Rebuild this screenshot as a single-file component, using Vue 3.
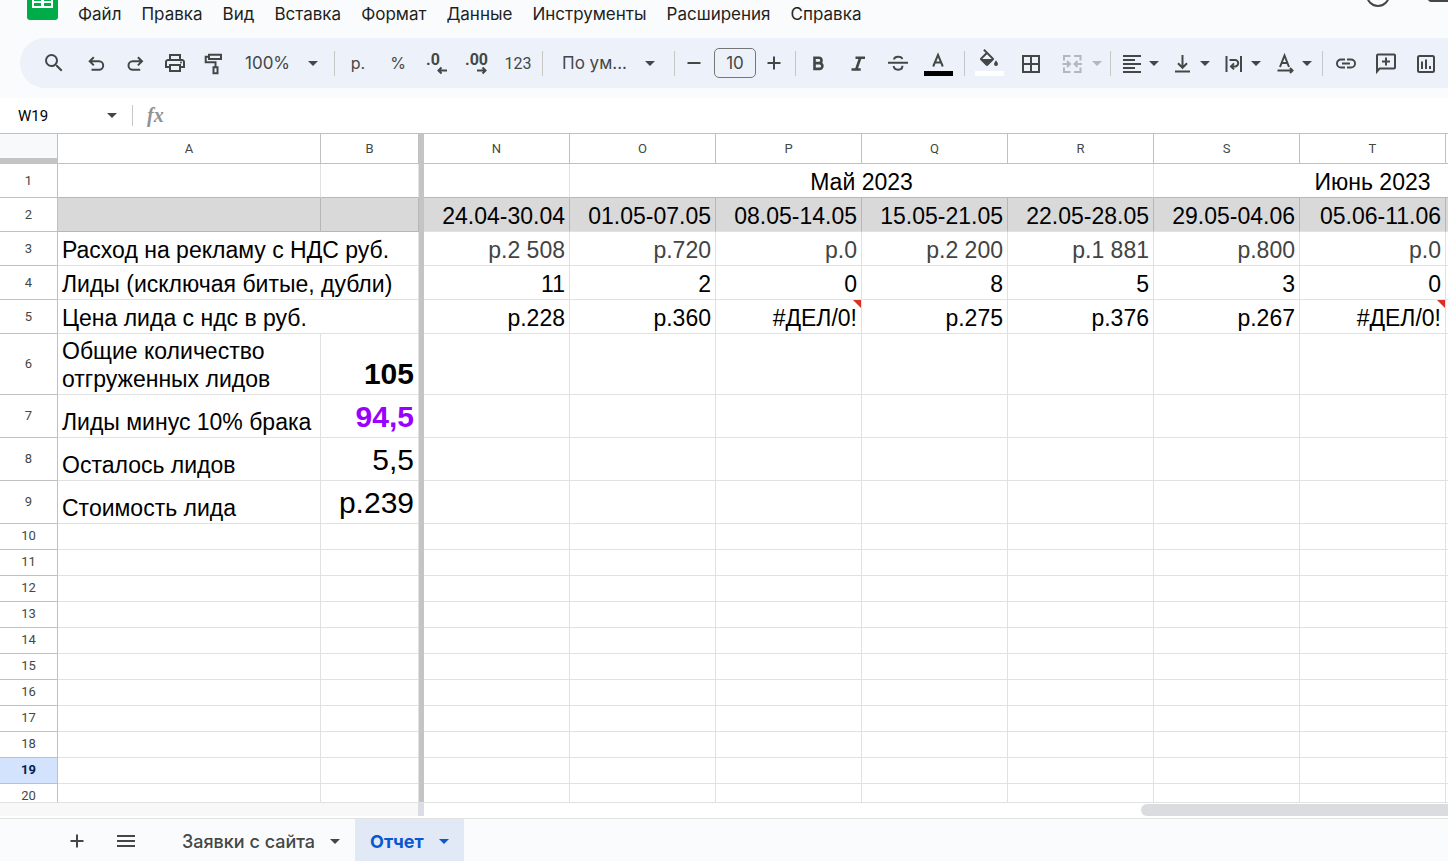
<script setup>
import { ref } from 'vue'

const menus = ['Файл', 'Правка', 'Вид', 'Вставка', 'Формат', 'Данные', 'Инструменты', 'Расширения', 'Справка']
const columns = ['N', 'O', 'P', 'Q', 'R', 'S', 'T', '']
const cellRef = ref('W19')
const fontSize = ref('10')

const periods = ['24.04-30.04', '01.05-07.05', '08.05-14.05', '15.05-21.05', '22.05-28.05', '29.05-04.06', '05.06-11.06', '']
const metrics = [
  { n: 3, label: 'Расход на рекламу с НДС руб.', kind: 'cost', values: ['р.2 508', 'р.720', 'р.0', 'р.2 200', 'р.1 881', 'р.800', 'р.0', ''] },
  { n: 4, label: 'Лиды (исключая битые, дубли)', kind: '', values: ['11', '2', '0', '8', '5', '3', '0', ''] },
  { n: 5, label: 'Цена лида с ндс в руб.', kind: '', values: ['р.228', 'р.360', '#ДЕЛ/0!', 'р.275', 'р.376', 'р.267', '#ДЕЛ/0!', ''] },
]
const totals = [
  { n: 6, label: 'Общие количество отгруженных лидов', value: '105', size: 'tall', kind: 'strong' },
  { n: 7, label: 'Лиды минус 10% брака', value: '94,5', size: 'mid', kind: 'strong violet' },
  { n: 8, label: 'Осталось лидов', value: '5,5', size: 'mid', kind: '' },
  { n: 9, label: 'Стоимость лида', value: 'р.239', size: 'mid', kind: '' },
]
const emptyRows = [10, 11, 12, 13, 14, 15, 16, 17, 18, 19, 20]
const selectedRow = 19
</script>

<template>
  <div class="app">
    <header class="top">
      <svg class="logo" viewBox="0 0 31 20" aria-hidden="true">
        <path d="M0 0h31v17a3 3 0 0 1-3 3H3a3 3 0 0 1-3-3z" fill="#00ac47" />
        <path d="M5 0h21v8H5z" fill="#fff" />
        <path d="M7 0h7v1H7zM17 0h7v1h-7zM7 3h7v3H7zM17 3h7v3h-7z" fill="#00ac47" />
      </svg>
      <nav class="menus">
        <button v-for="m in menus" :key="m" type="button">{{ m }}</button>
      </nav>
      <svg class="corner-icons" viewBox="0 0 84 8" aria-hidden="true">
        <circle cx="14" cy="-5" r="11" fill="none" stroke="#444746" stroke-width="2" />
        <path d="M64 0h20v2H67q-2 0-3-2z" fill="#444746" />
      </svg>
    </header>

    <div class="toolbar-wrap">
      <div class="toolbar" role="toolbar" aria-label="Панель инструментов">
        <button type="button" class="tool first" aria-label="Поиск">
          <svg class="ic" viewBox="0 0 24 24"><path d="M15.5 14h-.79l-.28-.27A6.47 6.47 0 0 0 16 9.5 6.5 6.5 0 1 0 9.5 16c1.61 0 3.09-.59 4.23-1.57l.27.28v.79l5 4.99L20.49 19l-4.99-5zm-6 0a4.5 4.5 0 1 1 0-9 4.5 4.5 0 0 1 0 9z" /></svg>
        </button>
        <button type="button" class="tool" aria-label="Отменить">
          <svg class="ic line" viewBox="0 0 24 24"><path d="M10.8 6.2 6.7 10.3l4.1 4.1M7 10.3h9a4.2 4.2 0 0 1 0 8.4H8.5" /></svg>
        </button>
        <button type="button" class="tool" aria-label="Повторить">
          <svg class="ic line" viewBox="0 0 24 24"><path d="m14.9 6.2 4.1 4.1-4.1 4.1M18.7 10.3h-9a4.2 4.2 0 0 0 0 8.4h7.5" /></svg>
        </button>
        <button type="button" class="tool" aria-label="Печать">
          <svg class="ic" viewBox="0 0 24 24"><path d="M19 8h-1V3H6v5H5c-1.66 0-3 1.34-3 3v6h4v4h12v-4h4v-6c0-1.66-1.34-3-3-3zM8 5h8v3H8V5zm8 12v2H8v-4h8v2zm2-2v-2H6v2H4v-4c0-.55.45-1 1-1h14c.55 0 1 .45 1 1v4h-2z" /><circle cx="18" cy="11.5" r="1" /></svg>
        </button>
        <button type="button" class="tool" aria-label="Копировать форматирование">
          <svg class="ic line" viewBox="0 0 24 24"><path d="M6 3.8h12V8H6zM6 5.8H2.7v5.4h9.8v4.6M10.5 16.2h4v6h-4z" /></svg>
        </button>
        <label class="pick zoom-pick">
          <select aria-label="Масштаб"><option>100%</option></select>
          <svg class="arrow" viewBox="0 0 10 5"><path d="M0 0h10L5 5z" /></svg>
        </label>
        <i class="sep snug"></i>
        <button type="button" class="tool text">р.</button>
        <button type="button" class="tool text">%</button>
        <button type="button" class="tool" aria-label="Уменьшить число знаков">
          <svg class="ic" viewBox="0 0 24 24"><text x="0" y="14">.0</text><path class="thin" d="M21 19.5h-8.500M15.500 16.500l-3 3 3 3" /></svg>
        </button>
        <button type="button" class="tool" aria-label="Увеличить число знаков">
          <svg class="ic" viewBox="0 0 24 24"><text x="-1" y="14">.00</text><path class="thin" d="M11 19.5h8.500M16.500 16.500l3 3-3 3" /></svg>
        </button>
        <button type="button" class="tool text small">123</button>
        <i class="sep"></i>
        <label class="pick font-pick">
          <select aria-label="Шрифт"><option>По ум...</option></select>
          <svg class="arrow" viewBox="0 0 10 5"><path d="M0 0h10L5 5z" /></svg>
        </label>
        <i class="sep"></i>
        <button type="button" class="tool step" aria-label="Уменьшить размер">
          <svg class="ic line" viewBox="0 0 24 24"><path d="M5.500 12h13" /></svg>
        </button>
        <input v-model="fontSize" class="size" aria-label="Размер шрифта" />
        <button type="button" class="tool step" aria-label="Увеличить размер">
          <svg class="ic line" viewBox="0 0 24 24"><path d="M5.500 12h13M12 5.500v13" /></svg>
        </button>
        <i class="sep tight"></i>
        <button type="button" class="tool" aria-label="Полужирный">
          <svg class="ic line bold" viewBox="0 0 24 24"><path d="M8.500 6.700h4.300a2.700 2.700 0 0 1 0 5.400H8.500zM8.500 12.100h5a2.900 2.900 0 0 1 0 5.800h-5z" /></svg>
        </button>
        <button type="button" class="tool" aria-label="Курсив">
          <svg class="ic line bold" viewBox="0 0 24 24"><path d="M9.500 6.700H19M5.500 18.500h9.200M14.300 6.700 10.200 18.500" /></svg>
        </button>
        <button type="button" class="tool" aria-label="Зачеркнутый">
          <svg class="ic line" viewBox="0 0 24 24"><path d="M2 11.700h20M8 8.500c.4-3.400 7.500-3.600 8.200-.4M7.700 15c.5 5 8.800 4.800 8.700-.3" /></svg>
        </button>
        <button type="button" class="tool" aria-label="Цвет текста">
          <svg class="ic" viewBox="0 0 24 24"><path class="line-path" d="M7.200 15.500 12 3.800l4.800 11.700M9 11.500h6" /><path d="M-2 20h29v5H-2z" fill="#000" /></svg>
        </button>
        <i class="sep wide"></i>
        <button type="button" class="tool roomy" aria-label="Цвет заливки">
          <svg class="ic" viewBox="0 0 24 24"><path d="M15.560 6.940 6.620-2 5.210-.59l2.380 2.380-5.150 5.150c-.59.59-.59 1.540 0 2.120l5.500 5.500c.29.290.68.440 1.060.440s.77-.150 1.060-.440l5.500-5.500c.59-.580.59-1.530 0-2.120zM4.210 8 9 3.210 13.790 8H4.210zM18 9.500s-2 2.170-2 3.500a2 2 0 0 0 4 0c0-1.330-2-3.500-2-3.500z" /><path d="M-3 20h29v5H-3z" fill="#fff" /></svg>
        </button>
        <button type="button" class="tool roomy" aria-label="Границы">
          <svg class="ic" viewBox="0 0 24 24"><path d="M2 4v18h18V4H2zm8 16H4v-6h6v6zm0-8H4V6h6v6zm8 8h-6v-6h6v6zm0-8h-6V6h6v6z" /></svg>
        </button>
        <button type="button" class="tool combo merge" disabled aria-label="Объединить ячейки">
          <svg class="ic line" viewBox="0 0 24 24"><path d="M10.500 5H4v4.500M14 5h6.500v4.500M10.500 21H4v-4.500M14 21h6.500v-4.500M2.500 13h7M22 13h-7M7 10l3 3-3 3M17.500 10l-3 3 3 3" /></svg>
          <svg class="arrow" viewBox="0 0 10 5"><path d="M0 0h10L5 5z" /></svg>
        </button>
        <i class="sep pinch"></i>
        <button type="button" class="tool combo" aria-label="Выравнивание по горизонтали">
          <svg class="ic" viewBox="0 0 24 24"><path d="M15 16H3v2h12v-2zm0-8H3v2h12V8zM3 14h18v-2H3v2zm0 8h18v-2H3v2zM3 4v2h18V4H3z" /></svg>
          <svg class="arrow" viewBox="0 0 10 5"><path d="M0 0h10L5 5z" /></svg>
        </button>
        <button type="button" class="tool combo" aria-label="Выравнивание по вертикали">
          <svg class="ic line" viewBox="0 0 24 24"><path d="M4 20.500h15M11.500 4v12.500M7 12.300l4.500 4.500 4.500-4.500" /></svg>
          <svg class="arrow" viewBox="0 0 10 5"><path d="M0 0h10L5 5z" /></svg>
        </button>
        <button type="button" class="tool combo" aria-label="Перенос текста">
          <svg class="ic line" viewBox="0 0 24 24"><path d="M4.500 5v16M19 5v16M7.500 9h5.500a3.200 3.200 0 0 1 0 6.400H9.500M12 12.400l-3 3 3 3" /></svg>
          <svg class="arrow" viewBox="0 0 10 5"><path d="M0 0h10L5 5z" /></svg>
        </button>
        <button type="button" class="tool combo" aria-label="Поворот текста">
          <svg class="ic line" viewBox="0 0 24 24"><path d="M7 16 11.500 4.500 16 16M8.500 12h6M4.500 19.500h15M17 17l2.500 2.500L17 22" /></svg>
          <svg class="arrow" viewBox="0 0 10 5"><path d="M0 0h10L5 5z" /></svg>
        </button>
        <i class="sep snug"></i>
        <button type="button" class="tool" aria-label="Ссылка">
          <svg class="ic" viewBox="0 0 24 24"><path d="M3.900 12.500c0-1.710 1.390-3.100 3.100-3.100h4V7.500H7a5 5 0 0 0 0 10h4v-1.900H7a3.100 3.100 0 0 1-3.100-3.100zM8 13.500h8v-2H8v2zm9-6h-4v1.900h4a3.100 3.100 0 0 1 0 6.200h-4v1.900h4a5 5 0 0 0 0-10z" /></svg>
        </button>
        <button type="button" class="tool" aria-label="Комментарий">
          <svg class="ic line" viewBox="0 0 24 24"><path d="M3 20.500V4.500q0-1 1-1h16q1 0 1 1v12q0 1-1 1H5.500zM12 6.500v8M8 10.500h8" /></svg>
        </button>
        <button type="button" class="tool" aria-label="Диаграмма">
          <svg class="ic line" viewBox="0 0 24 24"><rect x="4" y="5" width="16" height="16" rx="1.500" /><path d="M8 10.500V18M12 8.500V18M16 15v3" /></svg>
        </button>
      </div>
    </div>

    <div class="formula">
      <input v-model="cellRef" class="name-box" aria-label="Ячейка" />
      <svg class="arrow" viewBox="0 0 10 5"><path d="M0 0h10L5 5z" /></svg>
      <i class="sep"></i>
      <label for="fx" class="fx">fx</label>
      <input id="fx" class="fx-input" />
    </div>

    <main class="grid">
      <table>
        <colgroup>
          <col class="c-head" /><col class="c-a" /><col class="c-b" /><col class="c-freeze" />
          <col v-for="c in columns" :key="c" class="c-data" />
        </colgroup>
        <thead>
          <tr>
            <th class="corner"></th>
            <th>A</th>
            <th>B</th>
            <td class="freeze"></td>
            <th v-for="c in columns" :key="c">{{ c }}</th>
          </tr>
        </thead>
        <tbody>
          <tr class="row months">
            <th>1</th><td></td><td></td><td class="freeze"></td><td></td>
            <td colspan="4" class="center">Май 2023</td>
            <td colspan="3" class="center">Июнь 2023</td>
          </tr>
          <tr class="row periods">
            <th>2</th><td class="own"></td><td class="own"></td><td class="freeze"></td>
            <td v-for="(p, i) in periods" :key="i" class="num">{{ p }}</td>
          </tr>
          <tr v-for="r in metrics" :key="r.n" class="row">
            <th>{{ r.n }}</th>
            <td colspan="2">{{ r.label }}</td>
            <td class="freeze"></td>
            <td v-for="(v, i) in r.values" :key="i" class="num" :class="[r.kind, { error: v.startsWith('#') }]">{{ v }}</td>
          </tr>
          <tr v-for="r in totals" :key="r.n" :class="r.size">
            <th>{{ r.n }}</th>
            <td>{{ r.label }}</td>
            <td class="num big" :class="r.kind">{{ r.value }}</td>
            <td class="freeze"></td>
            <td v-for="c in columns" :key="c"></td>
          </tr>
          <tr v-for="n in emptyRows" :key="n" class="plain" :class="{ selected: n === selectedRow }">
            <th>{{ n }}</th><td></td><td></td><td class="freeze"></td>
            <td v-for="c in columns" :key="c"></td>
          </tr>
        </tbody>
      </table>
    </main>

    <div class="scroll">
      <div class="scroll-frozen"></div>
      <div class="scroll-grip"></div>
      <div class="scroll-track"><div class="thumb"></div></div>
    </div>

    <footer class="sheets">
      <button type="button" class="sheet-tool" aria-label="Добавить лист">
        <svg class="ic line" viewBox="0 0 24 24"><path d="M5.500 12h13M12 5.500v13" /></svg>
      </button>
      <button type="button" class="sheet-tool" aria-label="Все листы">
        <svg class="ic line" viewBox="0 0 24 24"><path d="M3 7h18M3 12h18M3 17h18" /></svg>
      </button>
      <button type="button" class="tab">Заявки с сайта<svg class="arrow" viewBox="0 0 10 5"><path d="M0 0h10L5 5z" /></svg></button>
      <button type="button" class="tab active">Отчет<svg class="arrow" viewBox="0 0 10 5"><path d="M0 0h10L5 5z" /></svg></button>
    </footer>
  </div>
</template>

<style>
body {
  overflow: hidden;
}
</style>

<style scoped>
.app {
  display: flex;
  flex-direction: column;
  height: 100vh;
  overflow: hidden;
  background: #fff;
  color: #1f1f1f;
  font-family: Inter, Roboto, "Liberation Sans", sans-serif;
}
button,
select,
input {
  margin: 0;
  padding: 0;
  border: 0;
  background: none;
  color: inherit;
  font: inherit;
  outline: 0;
}
.top {
  display: flex;
  align-items: flex-start;
  height: 38px;
  padding-left: 27px;
  background: #f9fbfd;
}
.logo {
  width: 31px;
  height: 20px;
  margin-right: 20px;
}
.menus {
  display: flex;
  flex: 1;
  gap: 20px;
  font-size: 17px;
  line-height: 28px;
  white-space: nowrap;
}
.corner-icons {
  width: 84px;
  height: 8px;
}
.toolbar-wrap {
  padding: 0 0 10px 20px;
  background: #f9fbfd;
}
.toolbar {
  display: flex;
  align-items: center;
  height: 50px;
  padding-left: 13px;
  overflow: hidden;
  border-radius: 25px 0 0 25px;
  background: #edf2fa;
  color: #444746;
  font-size: 17px;
}
.toolbar > * {
  flex: none;
}
.tool {
  display: flex;
  align-items: center;
  justify-content: center;
  width: 40px;
  height: 40px;
}
.tool.first,
.tool.roomy {
  width: 42px;
}
.tool.text {
  font-size: 16px;
}
.tool.small {
  font: 16px Roboto, sans-serif;
}
.tool.step {
  width: 30px;
}
.tool.combo {
  width: 51px;
  gap: 5px;
}
.tool.merge {
  width: 55px;
  gap: 8px;
}
.tool:disabled {
  color: #b4b7bb;
}
.ic {
  width: 24px;
  height: 24px;
  overflow: visible;
  fill: currentColor;
}
.ic text {
  font: 700 16px Roboto, sans-serif;
}
.line,
.thin,
.line-path {
  fill: none;
  stroke: currentColor;
  stroke-width: 2;
}
.bold {
  stroke-width: 2.6;
}
.arrow {
  flex: none;
  width: 10px;
  height: 5px;
  fill: currentColor;
}
.pick {
  display: flex;
  align-items: center;
}
.pick select {
  appearance: none;
  flex: 1;
  min-width: 0;
}
.zoom-pick {
  width: 73px;
  margin: 0 12px 0 10px;
}
.font-pick {
  width: 93px;
  margin: 0 15px;
}
.sep {
  width: 1px;
  height: 25px;
  margin: 0 4px;
  background: #c7c7c7;
}
.sep.snug {
  margin-right: 3px;
}
.sep.tight {
  margin: 0 2px 0 6px;
}
.sep.wide {
  margin-left: 6px;
}
.sep.pinch {
  margin: 0 3px 0 2px;
}
.size {
  width: 40px;
  height: 28px;
  margin: 0 3px 0 5px;
  border: 1px solid #747775;
  border-radius: 5px;
  text-align: center;
}
.formula {
  display: flex;
  align-items: center;
  height: 35px;
  padding-left: 18px;
  color: #444746;
}
.name-box {
  width: 89px;
  color: #000;
  font: 15px Roboto, sans-serif;
}
.formula .sep {
  height: 21px;
  margin: 0 14px 0 15px;
}
.fx {
  color: #8f9396;
  font: italic 700 20px "Liberation Serif", serif;
}
.fx-input {
  flex: 1;
}
.grid {
  flex: 1;
  min-height: 0;
  overflow: hidden;
  border-top: 1px solid #c0c0c0;
  border-bottom: 1px solid #e1e1e1;
}
table {
  width: 1592px;
  table-layout: fixed;
  border-collapse: separate;
  border-spacing: 0;
  color: #000;
  font: 23px/28px "Liberation Sans", Arial, sans-serif;
}
.c-head { width: 58px; }
.c-a { width: 263px; }
.c-b { width: 98px; }
.c-freeze { width: 5px; }
.c-data { width: 146px; }
th,
td {
  box-sizing: border-box;
  border-right: 1px solid #e1e1e1;
  border-bottom: 1px solid #e1e1e1;
}
th {
  padding: 0;
  border-color: #c0c0c0;
  color: #444746;
  font: 13px/20px Roboto, sans-serif;
  vertical-align: middle;
}
td {
  padding: 0 4px 1px;
  vertical-align: bottom;
}
thead tr { height: 30px; }
.row { height: 34px; }
.tall { height: 61px; }
.mid { height: 43px; }
.plain { height: 26px; }
.plain th { padding-bottom: 2px; }
.corner {
  border-bottom: 6px solid #c4c4c4;
  background: #f8f9fa;
}
.freeze {
  padding: 0;
  border: 0;
  background: #c4c4c4;
}
.months td:not(.freeze) {
  border-bottom-color: #b7b7b7;
}
.periods td:not(.freeze) {
  border-right-color: #b7b7b7;
  background: #d9d9d9;
}
.periods .own {
  border-bottom-color: #b7b7b7;
}
.center { text-align: center; }
.num {
  text-align: right;
  white-space: nowrap;
}
.cost { color: #434343; }
.error {
  position: relative;
}
.error::after {
  position: absolute;
  top: 0;
  right: 0;
  width: 8px;
  height: 8px;
  background: #d93025;
  clip-path: polygon(0 0, 100% 0, 100% 100%);
  content: "";
}
.big {
  padding-bottom: 2px;
  font-size: 30px;
  line-height: 36px;
}
.strong { font-weight: 700; }
.violet { color: #9900ff; }
.selected th {
  background: #d3e3fd;
  color: #041e49;
  font-weight: 700;
}
.scroll {
  display: flex;
  height: 15px;
}
.scroll-frozen {
  width: 418px;
  height: 13px;
  background: #f8f8f8;
}
.scroll-grip {
  width: 6px;
  height: 13px;
  background: #dadce6;
}
.scroll-track {
  flex: 1;
  padding-top: 1px;
}
.thumb {
  width: 30%;
  height: 12px;
  margin-left: auto;
  border-radius: 6px 0 0 6px;
  background: #dadce0;
}
.sheets {
  display: flex;
  height: 42px;
  padding-left: 52px;
  border-top: 1px solid #e1e3e1;
  background: #f9fbfd;
  color: #444746;
  font-size: 18px;
  font-weight: 500;
}
.sheet-tool {
  display: flex;
  align-items: center;
  justify-content: center;
  width: 49px;
  padding-top: 2px;
}
.tab {
  display: flex;
  align-items: center;
  gap: 15px;
  padding: 3px 15px 0;
  white-space: nowrap;
}
.sheet-tool + .tab {
  margin-left: 17px;
}
.tab.active {
  background: #e1e9f7;
  color: #0b57d0;
  font-weight: 700;
}
</style>
